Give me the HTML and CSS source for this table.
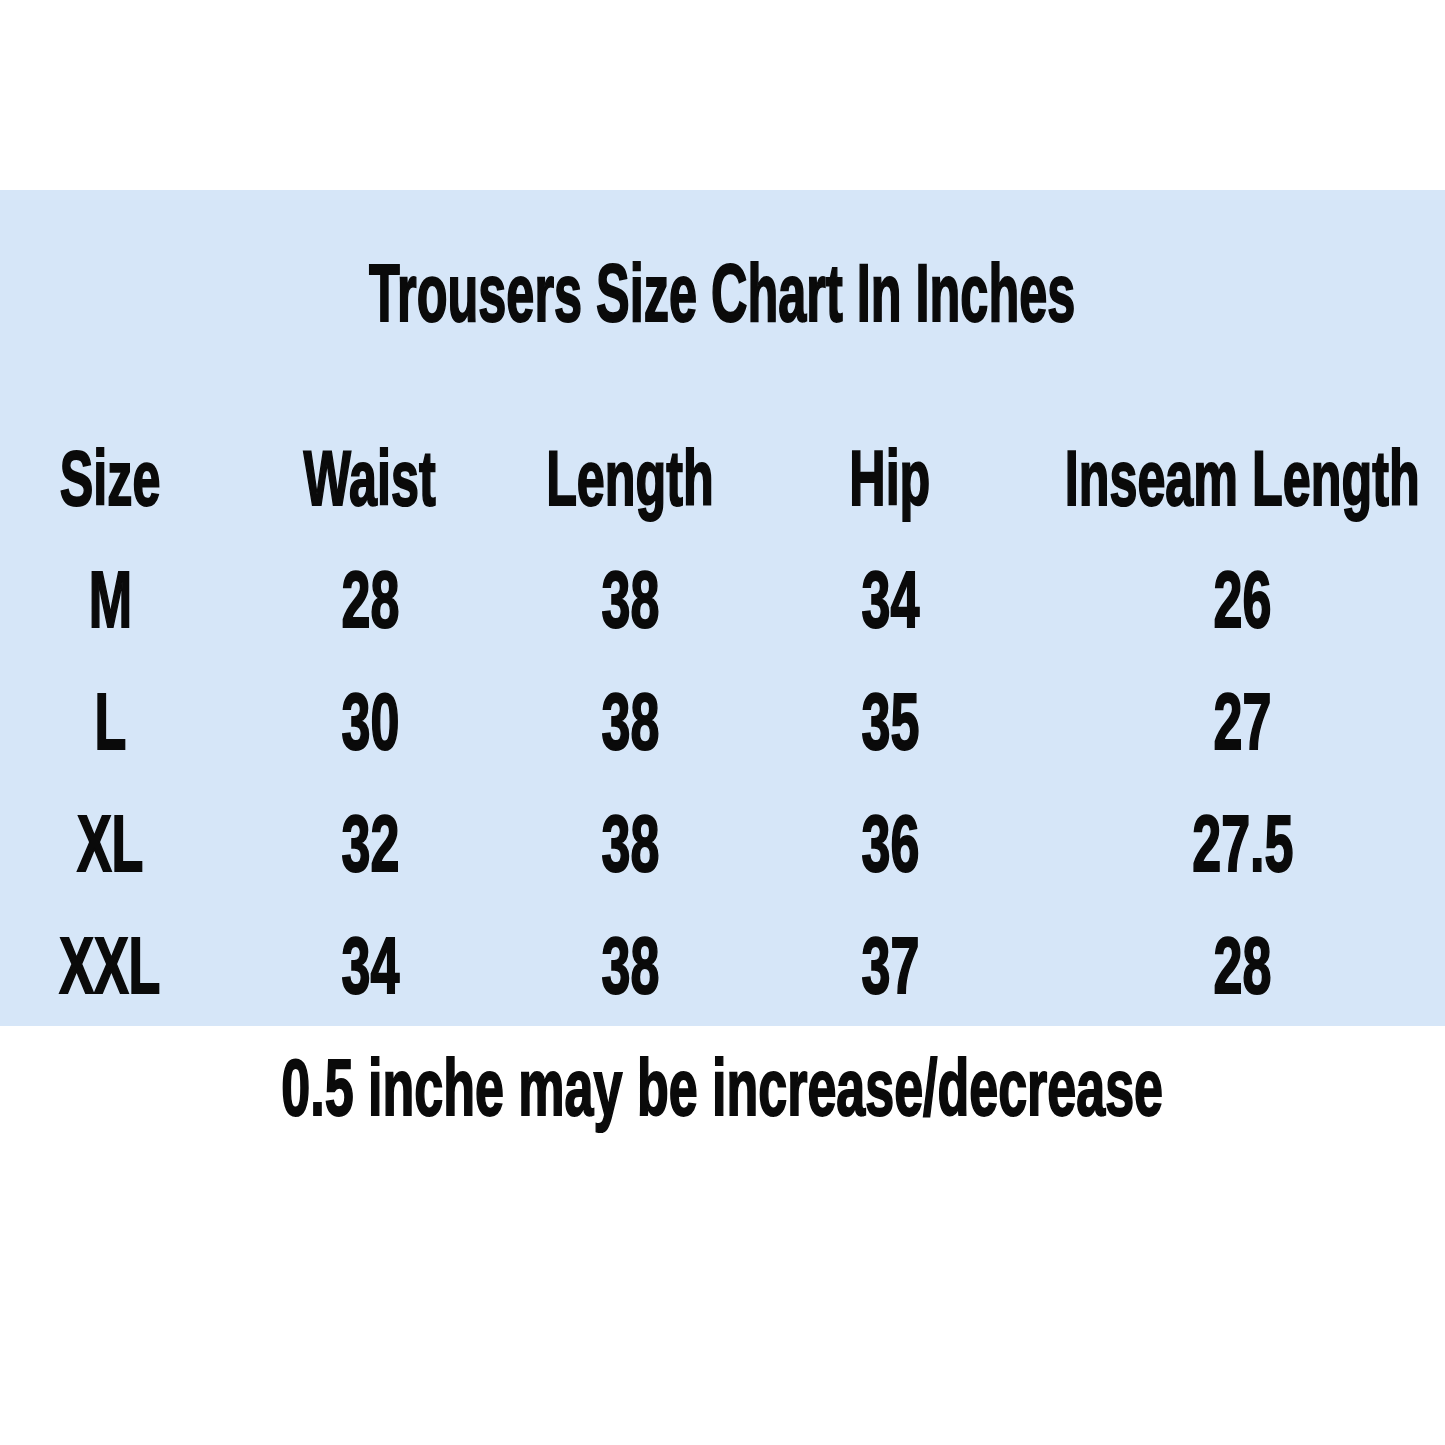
FILE: index.html
```html
<!DOCTYPE html>
<html lang="en">
<head>
<meta charset="utf-8">
<title>Trousers Size Chart</title>
<link rel="stylesheet" href="styles.css">
</head>
<body>
<main class="page">
  <section class="panel">
    <h1 class="title"><span class="sq sq-title">Trousers Size Chart In Inches</span></h1>
    <div class="chart">
      <div class="cell head"><span class="sq">Size</span></div>
      <div class="cell head"><span class="sq">Waist</span></div>
      <div class="cell head"><span class="sq">Length</span></div>
      <div class="cell head"><span class="sq">Hip</span></div>
      <div class="cell head"><span class="sq">Inseam Length</span></div>

      <div class="cell"><span class="sq">M</span></div>
      <div class="cell"><span class="sq">28</span></div>
      <div class="cell"><span class="sq">38</span></div>
      <div class="cell"><span class="sq">34</span></div>
      <div class="cell"><span class="sq">26</span></div>

      <div class="cell"><span class="sq">L</span></div>
      <div class="cell"><span class="sq">30</span></div>
      <div class="cell"><span class="sq">38</span></div>
      <div class="cell"><span class="sq">35</span></div>
      <div class="cell"><span class="sq">27</span></div>

      <div class="cell"><span class="sq">XL</span></div>
      <div class="cell"><span class="sq">32</span></div>
      <div class="cell"><span class="sq">38</span></div>
      <div class="cell"><span class="sq">36</span></div>
      <div class="cell"><span class="sq">27.5</span></div>

      <div class="cell"><span class="sq">XXL</span></div>
      <div class="cell"><span class="sq">34</span></div>
      <div class="cell"><span class="sq">38</span></div>
      <div class="cell"><span class="sq">37</span></div>
      <div class="cell"><span class="sq">28</span></div>
    </div>
  </section>
  <p class="note"><span class="sq">0.5 inche may be increase/decrease</span></p>
</main>
</body>
</html>
```

FILE: styles.css
```css
html, body {
  margin: 0;
  padding: 0;
  background: #ffffff;
}

.page {
  width: 1445px;
  height: 1445px;
  padding-top: 190px;
  box-sizing: border-box;
  overflow: hidden;
  font-family: "Liberation Sans", Arial, sans-serif;
  font-weight: 700;
  color: #0a0a0a;
}

.panel {
  background: #d6e6f8;
  height: 836px;
  padding-top: 53px;
  box-sizing: border-box;
}

.sq {
  display: inline-block;
  white-space: nowrap;
  transform: scaleX(0.65);
  transform-origin: center;
  -webkit-text-stroke: 2px #0a0a0a;
}

.title {
  display: flex;
  justify-content: center;
  margin: 0 0 74px 0;
  font-size: 82px;
  line-height: 100px;
  font-weight: 700;
}

.sq-title {
  transform: scaleX(0.615);
}

.chart {
  display: grid;
  grid-template-columns: 220px 300px 220px 300px minmax(0, 1fr);
  grid-auto-rows: 122px;
}

.cell {
  display: flex;
  justify-content: center;
  min-width: 0;
  font-size: 80px;
  line-height: 122px;
  white-space: nowrap;
}

.head {
  font-size: 78px;
}

.head .sq {
  transform: scaleX(0.645);
}

.note {
  display: flex;
  justify-content: center;
  margin: 12px 0 0 0;
  font-size: 80px;
  line-height: 100px;
}
```
